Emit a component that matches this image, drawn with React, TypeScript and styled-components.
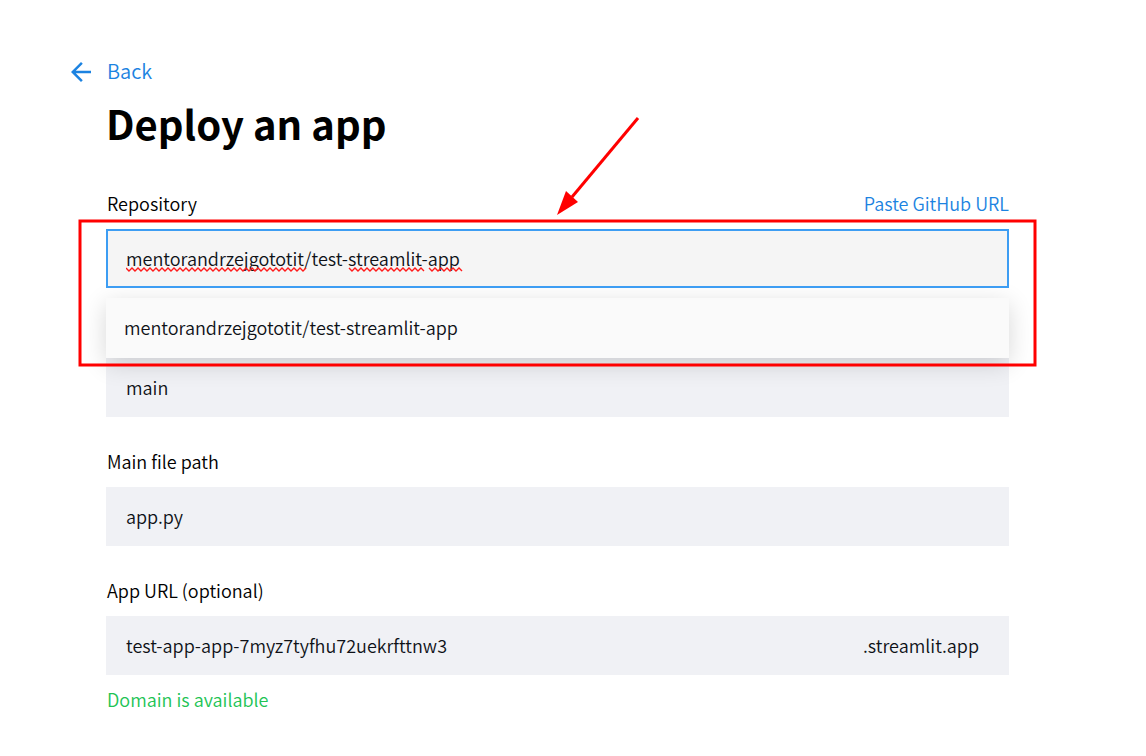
import React from "react";
import styled, { createGlobalStyle } from "styled-components";

const GlobalStyle = createGlobalStyle`
  *, *::before, *::after { box-sizing: border-box; }
  body {
    margin: 0;
    background: #ffffff;
    color: #000000;
    font-family: "Noto Sans CJK SC", "Noto Sans", sans-serif;
    font-size: 18px;
    font-weight: 350;
    line-height: 28px;
  }
`;

const Page = styled.main`
  padding: 57px 137px 40px 106px;
`;

const BackLink = styled.a`
  display: flex;
  align-items: center;
  gap: 11px;
  width: fit-content;
  margin-left: -40px;
  color: #1c83e1;
  font-size: 20px;
  line-height: 28px;
  text-decoration: none;
`;

const BackIcon = styled.svg`
  width: 30px;
  height: 30px;
  fill: currentColor;
`;

const BackText = styled.span`
  padding-bottom: 2px;
`;

const Title = styled.h1`
  margin: 6px 0 36px;
  color: #000000;
  font-size: 40px;
  line-height: 60px;
  font-weight: 700;
`;

const Form = styled.form`
  display: flex;
  flex-direction: column;
`;

const Field = styled.div<{ $open?: boolean }>`
  display: flex;
  flex-direction: column;
  margin-bottom: ${(p) => (p.$open ? 0 : 30)}px;
`;

const LabelRow = styled.div`
  display: flex;
  justify-content: space-between;
  padding: 0 0 12px 1px;
`;

const PasteLink = styled.a`
  color: #1c83e1;
  text-decoration: none;
`;

const Control = styled.div<{ $active?: boolean }>`
  position: relative;
  display: flex;
  align-items: center;
  height: 59px;
  padding: 0 ${(p) => (p.$active ? 18 : 20)}px 2px;
  border: ${(p) => (p.$active ? "2px solid #3d9df3" : "none")};
  background: ${(p) => (p.$active ? "#f5f5f5" : "#f0f1f5")};
  color: #0e1117;
`;

const TextInput = styled.input`
  flex: 1;
  min-width: 0;
  padding: 0;
  border: 0;
  outline: 0;
  background: transparent;
  color: inherit;
  font: inherit;
`;

const Suffix = styled.span`
  padding-right: 10px;
`;

const Combo = styled.div`
  position: relative;
  z-index: 1;
`;

const Options = styled.ul`
  margin: 10px 0 0;
  padding: 0;
  list-style: none;
  background: #fafafa;
  color: #0e1117;
  box-shadow: 0 6px 24px rgba(0, 0, 0, 0.16);
`;

const Option = styled.li`
  padding: 15px 18px 17px;
`;

const Hint = styled.p`
  margin: 10px 0 0;
  padding-left: 1px;
  color: #21c354;
`;

const Squiggles = styled.svg`
  position: absolute;
  left: 18px;
  bottom: 13px;
  pointer-events: none;
`;

const Highlight = styled.svg`
  position: absolute;
  top: -8px;
  left: -26px;
  width: calc(100% + 52px);
  height: calc(100% + 15px);
  overflow: visible;
  pointer-events: none;
`;

const wave = (from: number, to: number) => {
  let d = `M${from} 1`;
  for (let x = from, down = true; x + 3 <= to; x += 3, down = !down) {
    d += `L${x + 3} ${down ? 4 : 1}`;
  }
  return d;
};

export default function App() {
  return (
    <>
      <GlobalStyle />
      <Page>
        <BackLink href="#">
          <BackIcon viewBox="0 0 24 24" aria-hidden="true">
            <path d="M20 11H7.83l5.59-5.59L12 4l-8 8 8 8 1.41-1.41L7.83 13H20v-2z" />
          </BackIcon>
          <BackText>Back</BackText>
        </BackLink>
        <Title>Deploy an app</Title>
        <Form>
          <Field $open>
            <LabelRow>
              <label htmlFor="repository">Repository</label>
              <PasteLink href="#">Paste GitHub URL</PasteLink>
            </LabelRow>
            <Combo>
              <Control $active>
                <TextInput id="repository" spellCheck={false} defaultValue="mentorandrzejgototit/test-streamlit-app" />
                <Squiggles width="340" height="6" fill="none" stroke="#ff1a1a" strokeWidth="1.4" aria-hidden="true">
                  <path d={wave(0, 180)} />
                  <path d={wave(223, 298)} />
                  <path d={wave(303, 336)} />
                </Squiggles>
              </Control>
              <Options role="listbox" aria-label="Repositories">
                <Option role="option" aria-selected="true">mentorandrzejgototit/test-streamlit-app</Option>
              </Options>
              <Highlight aria-hidden="true">
                <rect width="100%" height="100%" fill="none" stroke="#ff0000" strokeWidth="3" />
                <path d="M558 -103L492 -24" stroke="#ff0000" strokeWidth="3" />
                <path d="M477 -6L486 -30L498 -19Z" fill="#ff0000" />
              </Highlight>
            </Combo>
          </Field>
          <Field>
            <Control>
              <TextInput aria-label="Branch" defaultValue="main" />
            </Control>
          </Field>
          <Field>
            <LabelRow>
              <label htmlFor="path">Main file path</label>
            </LabelRow>
            <Control>
              <TextInput id="path" defaultValue="app.py" />
            </Control>
          </Field>
          <Field>
            <LabelRow>
              <label htmlFor="url">App URL (optional)</label>
            </LabelRow>
            <Control>
              <TextInput id="url" spellCheck={false} defaultValue="test-app-app-7myz7tyfhu72uekrfttnw3" />
              <Suffix>.streamlit.app</Suffix>
            </Control>
            <Hint>Domain is available</Hint>
          </Field>
        </Form>
      </Page>
    </>
  );
}
